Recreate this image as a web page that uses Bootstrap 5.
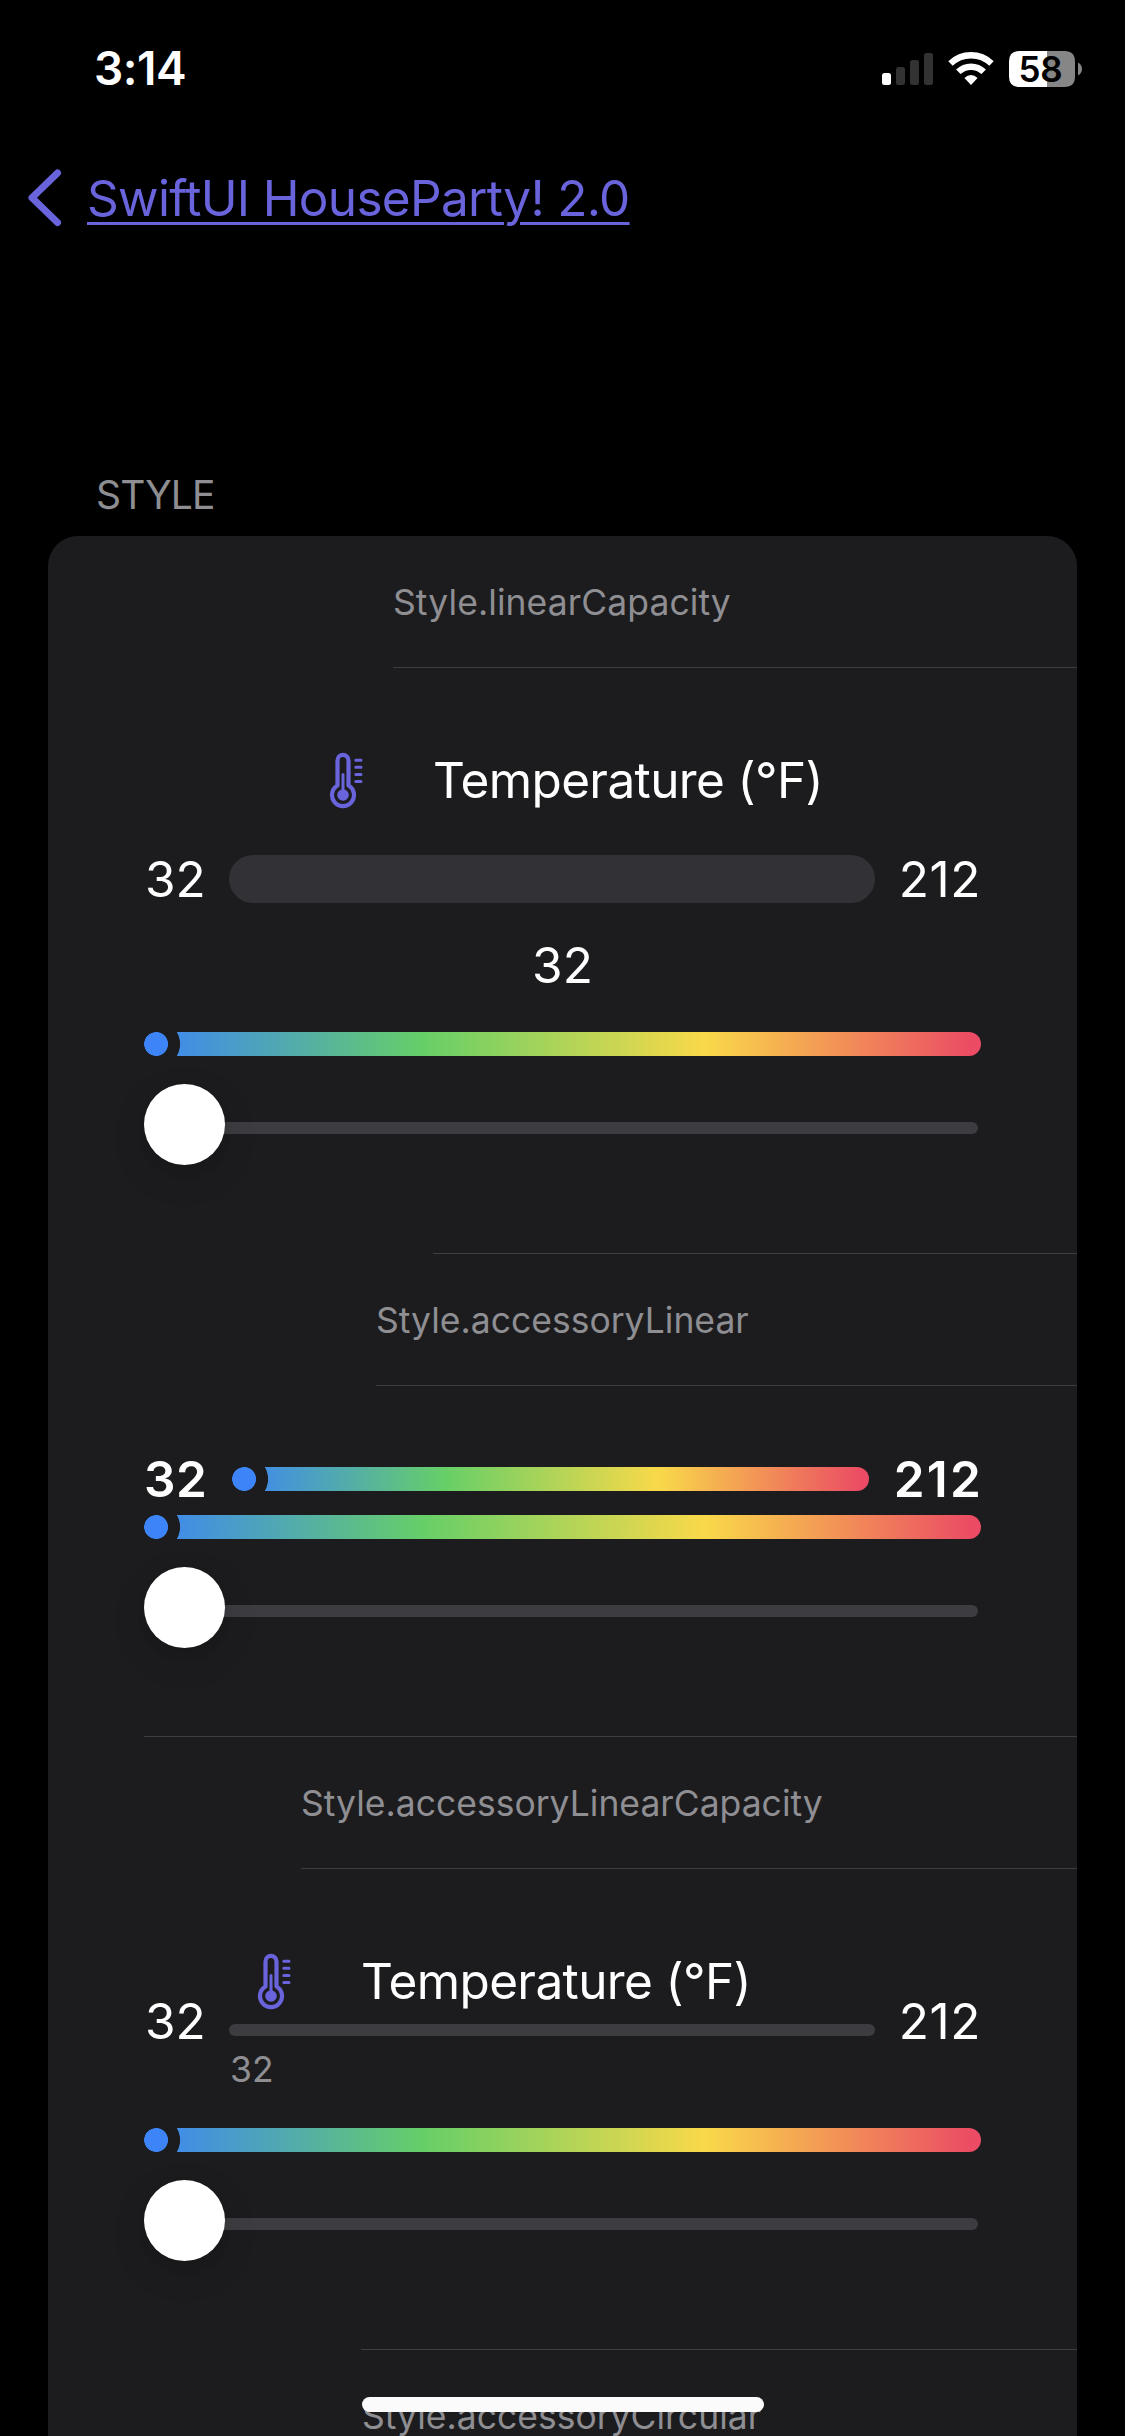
<!DOCTYPE html>
<html lang="en" data-bs-theme="dark">
<head>
<meta charset="utf-8">
<meta name="viewport" content="width=device-width, initial-scale=1">
<title>Gauge styles</title>
<link href="https://cdn.jsdelivr.net/npm/bootstrap@5.3.0/dist/css/bootstrap.min.css" rel="stylesheet">
<style>
  :root { --sheet: #1c1c1e; --accent: #6963dc; --muted: #8e8e93; --line: #3d3d41; --track: #3d3c41; }
  body { background: #000; color: #fff; font-family: Inter, "Liberation Sans", sans-serif; }
  .screen { width: 1125px; height: 2436px; background: #000; }
  .status-bar { height: 168px; padding: 40px 43px 0 94px; }
  .clock { font-size: 46px; line-height: 56px; font-weight: 600; letter-spacing: -.5px; }
  .status-icons { height: 36px; margin-top: 11px; }
  .back-nav { height: 60px; padding-left: 27px; color: var(--accent); }
  .back-nav svg { margin-right: 25px; }
  .back-link { color: var(--accent); font-size: 49.5px; line-height: 60px; letter-spacing: -.68px;
    text-decoration: underline; text-decoration-thickness: 3px; text-underline-offset: 6px; }
  .section-title { margin: 242px 0 0 96px; height: 66px; padding-top: 1px; font-size: 39px; line-height: 48px; letter-spacing: -.87px; color: var(--muted); }
  .sheet { margin: 0 48px; height: 1900px; background: var(--sheet); border-radius: 30px 30px 0 0; }
  .style-name { height: 131px; padding-top: 45px; font-size: 35.5px; line-height: 43px; letter-spacing: 0; color: var(--muted); }
  .divider { height: 1px; background: var(--line); }
  .in-1 { margin-left: 345px; } .in-2 { margin-left: 385px; } .in-3 { margin-left: 328px; }
  .in-4 { margin-left: 96px; } .in-5 { margin-left: 253px; } .in-6 { margin-left: 313px; }
  .tx-1 { padding-left: 345px; letter-spacing: .08px; } .tx-3 { padding-left: 328px; }
  .tx-5 { padding-left: 253px; } .tx-6 { padding-left: 314px; }
  .cell { padding: 82px 96px 88px; }
  .cell-tight { padding-top: 63px; }
  .reading { font-size: 49.5px; line-height: 60px; }
  .gauge-title { letter-spacing: -.62px; }
  .gauge-title svg { margin-right: 70px; }
  .title-wide { padding-left: 185px; }
  .title-narrow { padding-left: 28px; }
  .lo { width: 85px; padding-left: 1px; } .hi { width: 106px; letter-spacing: .6px; }
  .strong-row { height: 60px; font-weight: 600; margin-bottom: 6px; }
  .strong-row .lo { width: 88px; padding-left: 0; letter-spacing: .6px; }
  .strong-row .hi { width: 112px; letter-spacing: 2.2px; }
  .strong-row .hi span { margin-right: -2px; }
  .capacity { height: 48px; border-radius: 24px; background: #323136; }
  .capacity-thin { height: 12px; margin-top: 13px; border-radius: 6px; background: var(--track); }
  .caption-sm { font-size: 35.5px; line-height: 43px; margin-top: 12px; padding-left: 1px; color: var(--muted); }
  .spectrum { height: 24px; border-radius: 12px;
    background: radial-gradient(circle at 12px 12px, #3c84f7 11.6px, var(--sheet) 12.4px, var(--sheet) 23.6px, transparent 24.4px),
      linear-gradient(90deg, #3c84f7 0, #67cf67 33.6%, #f9d949 67%, #eb4b64 99%); }
  .slider { height: 81px; margin-top: 28px; padding-right: 3px; }
  .slider-track { height: 12px; margin-top: 7px; margin-left: -20px; border-radius: 6px; background: var(--track); }
  .thumb { width: 81px; height: 81px; z-index: 1; box-shadow: 0 12px 36px rgba(0,0,0,.12), 0 4px 10px rgba(0,0,0,.08); }
  .home-bar { left: 362px; top: 2397px; width: 402px; height: 15px; border-radius: 7.5px; background: #fbfbfb; }
</style>
</head>
<body class="m-0">
<svg class="d-none" xmlns="http://www.w3.org/2000/svg">
  <symbol id="thermo" viewBox="0 0 34 60">
    <g fill="none" stroke="currentColor" stroke-linecap="round">
      <path stroke-width="4.200" d="M8.500 35.500V10.400a5.500 5.500 0 0 1 11 0v25.100a11 11 0 1 1-11 0z" stroke-linejoin="round"/>
      <path stroke-width="3" d="M14 24.500v20M26.800 10.200h5.200M26.800 17.300h5.200M26.800 24.400h5.200M26.800 31.500h5.200"/>
    </g>
    <circle cx="14" cy="45" r="5.800" fill="currentColor"/>
  </symbol>
</svg>
<div class="screen position-relative overflow-hidden">
  <header class="status-bar d-flex justify-content-between align-items-start">
    <div class="clock">3:14</div>
    <svg class="status-icons" width="202" height="36" viewBox="880 51 202 36">
      <rect x="882" y="73" width="9" height="12" rx="2.500" fill="#fff"/>
      <g fill="#323232"><rect x="896" y="67" width="9" height="18" rx="2.500"/><rect x="910" y="60" width="9" height="25" rx="2.500"/><rect x="924" y="53" width="9" height="32" rx="2.500"/></g>
      <g fill="none" stroke="#fff" stroke-width="6.400"><path d="M950.500 63.500a29.500 29.500 0 0 1 41 0"/><path d="M958.300 71.800a18.300 18.300 0 0 1 25.400 0"/></g>
      <path fill="#fff" d="M971 85l-6.600-7q6.600-6 13.200 0z"/>
      <path fill="#fff" d="M1047 51h-27.500q-10.500 0-10.500 10.500v15q0 10.500 10.500 10.500h27.500z"/>
      <path fill="#868686" d="M1047 51h17.500q10.500 0 10.500 10.500v15q0 10.500-10.500 10.500h-17.500z"/>
      <path fill="#868686" d="M1078 62.500q4 2.300 4 6.500t-4 6.500z"/>
      <text x="1018.500" y="81.500" font-size="35" font-weight="600" letter-spacing="-.3" fill="#000">58</text>
    </svg>
  </header>
  <nav class="back-nav d-flex align-items-start">
    <svg width="35" height="60" viewBox="0 0 35 60" fill="none" stroke="currentColor" stroke-width="7" stroke-linecap="round" stroke-linejoin="round"><path d="M30.500 5L5 29.700L30.500 54.500"/></svg>
    <a class="back-link" href="#">SwiftUI HouseParty! 2.0</a>
  </nav>
  <div class="section-title">STYLE</div>
  <main class="sheet">
    <div class="style-name tx-1">Style.linearCapacity</div>
    <div class="divider in-1"></div>

    <section class="cell">
      <div class="gauge-title title-wide reading d-flex align-items-center">
        <svg width="34" height="60" color="#6963dc"><use href="#thermo"/></svg>Temperature (°F)
      </div>
      <div class="reading d-flex align-items-center" style="margin-top:39px">
        <div class="lo">32</div><div class="capacity flex-grow-1"></div><div class="hi text-end">212</div>
      </div>
      <div class="reading text-center" style="margin:26px 0 37px">32</div>
      <div class="spectrum"></div>
      <div class="slider d-flex align-items-center"><div class="thumb rounded-circle bg-white position-relative flex-shrink-0"></div><div class="slider-track flex-grow-1"></div></div>
    </section>
    <div class="divider in-2"></div>

    <div class="style-name tx-3">Style.accessoryLinear</div>
    <div class="divider in-3"></div>
    <section class="cell cell-tight">
      <div class="strong-row reading d-flex align-items-center">
        <div class="lo">32</div><div class="spectrum flex-grow-1"></div><div class="hi text-end"><span>212</span></div>
      </div>
      <div class="spectrum"></div>
      <div class="slider d-flex align-items-center"><div class="thumb rounded-circle bg-white position-relative flex-shrink-0"></div><div class="slider-track flex-grow-1"></div></div>
    </section>
    <div class="divider in-4"></div>

    <div class="style-name tx-5">Style.accessoryLinearCapacity</div>
    <div class="divider in-5"></div>
    <section class="cell">
      <div class="d-flex align-items-center" style="margin-bottom:37px;height:140px">
        <div class="lo reading">32</div>
        <div class="flex-grow-1">
          <div class="gauge-title title-narrow reading d-flex align-items-center">
            <svg width="34" height="60" color="#6963dc"><use href="#thermo"/></svg>Temperature (°F)
          </div>
          <div class="capacity-thin"></div>
          <div class="caption-sm">32</div>
        </div>
        <div class="hi reading text-end">212</div>
      </div>
      <div class="spectrum"></div>
      <div class="slider d-flex align-items-center"><div class="thumb rounded-circle bg-white position-relative flex-shrink-0"></div><div class="slider-track flex-grow-1"></div></div>
    </section>
    <div class="divider in-6"></div>
    <div class="style-name tx-6">Style.accessoryCircular</div>
  </main>
  <div class="home-bar position-absolute"></div>
</div>
<script src="https://cdn.jsdelivr.net/npm/bootstrap@5.3.0/dist/js/bootstrap.bundle.min.js"></script>
</body>
</html>
